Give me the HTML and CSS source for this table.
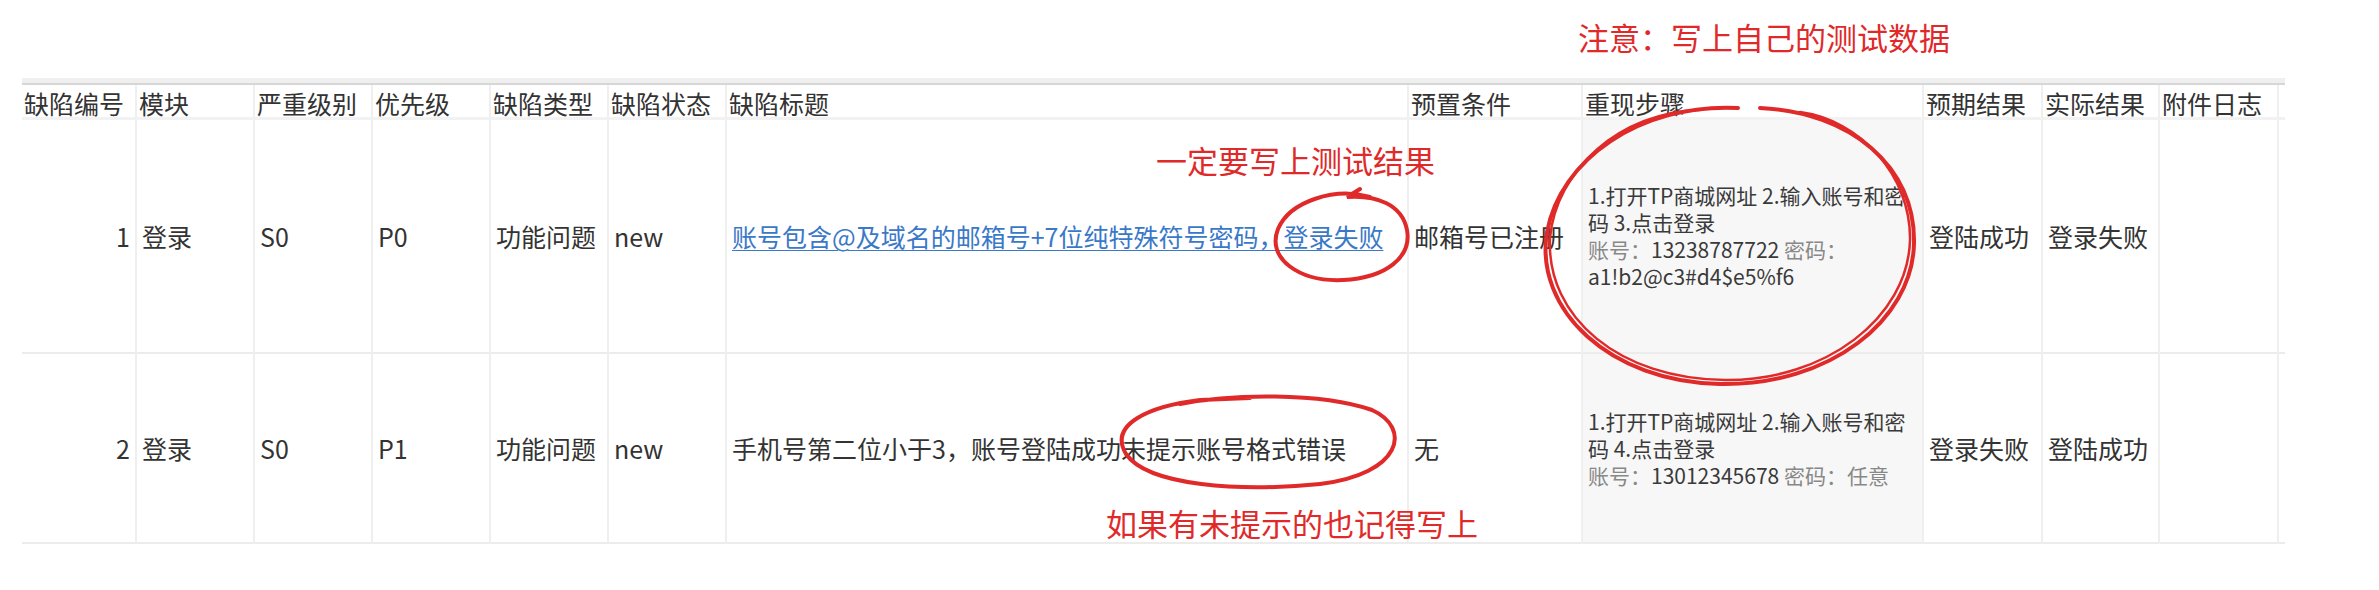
FILE: index.html
```html
<!DOCTYPE html>
<html lang="zh-CN">
<head>
    <meta charset="UTF-8">
    <meta name="viewport" content="width=device-width, initial-scale=1.0">
    <title>缺陷报告</title>
    <link rel="stylesheet" href="styles.css">
</head>
<body>
    <div class="page">
        <p class="note">注意：写上自己的测试数据</p>
        <div class="sheet">
            <div class="strip"></div>
            <div class="grid">
                <!-- header -->
                <div class="cell head">缺陷编号</div>
                <div class="cell head">模块</div>
                <div class="cell head">严重级别</div>
                <div class="cell head">优先级</div>
                <div class="cell head">缺陷类型</div>
                <div class="cell head">缺陷状态</div>
                <div class="cell head">缺陷标题</div>
                <div class="cell head">预置条件</div>
                <div class="cell head">重现步骤</div>
                <div class="cell head">预期结果</div>
                <div class="cell head">实际结果</div>
                <div class="cell head">附件日志</div>
                <div class="cell head edge"></div>

                <!-- row 1 -->
                <div class="cell num">1</div>
                <div class="cell">登录</div>
                <div class="cell">S0</div>
                <div class="cell">P0</div>
                <div class="cell">功能问题</div>
                <div class="cell">new</div>
                <div class="cell"><a class="link" href="#">账号包含@及域名的邮箱号+7位纯特殊符号密码，登录失败</a></div>
                <div class="cell">邮箱号已注册</div>
                <div class="cell steps">
                    <div>1.打开TP商城网址 2.输入账号和密</div>
                    <div>码 3.点击登录</div>
                    <div><span class="muted">账号：</span>13238787722 <span class="muted">密码：</span></div>
                    <div>a1!b2@c3#d4$e5%f6</div>
                </div>
                <div class="cell">登陆成功</div>
                <div class="cell">登录失败</div>
                <div class="cell"></div>
                <div class="cell edge"></div>

                <!-- row 2 -->
                <div class="cell num">2</div>
                <div class="cell">登录</div>
                <div class="cell">S0</div>
                <div class="cell">P1</div>
                <div class="cell">功能问题</div>
                <div class="cell">new</div>
                <div class="cell">手机号第二位小于3，账号登陆成功未提示账号格式错误</div>
                <div class="cell">无</div>
                <div class="cell steps">
                    <div>1.打开TP商城网址 2.输入账号和密</div>
                    <div>码 4.点击登录</div>
                    <div><span class="muted">账号：</span>13012345678 <span class="muted">密码：任意</span></div>
                </div>
                <div class="cell">登录失败</div>
                <div class="cell">登陆成功</div>
                <div class="cell"></div>
                <div class="cell edge"></div>
            </div>
        </div>
    </div>

    <!-- hand-drawn annotations on top of the sheet -->
    <p class="tip tip-result">一定要写上测试结果</p>
    <p class="tip tip-missing">如果有未提示的也记得写上</p>
    <svg class="marks" width="2379" height="590" viewBox="0 0 2379 590">
        <g fill="none" stroke="#e02a2a" stroke-linecap="round">
            <path stroke-width="4" d="M1370,197 C1335,187 1290,201 1278,229 C1266,259 1300,282 1343,280 C1386,278 1412,257 1407,230 C1402,204 1376,195 1347,197 L1360,189"/>
            <path stroke-width="4" d="M1738,108 C1640,103 1560,160 1547,232 C1534,310 1610,382 1720,384 C1830,386 1912,320 1914,244 C1916,166 1850,112 1760,108"/>
            <path stroke-width="2.5" d="M1700,110 C1620,112 1556,170 1550,238 C1546,318 1620,379 1725,380 C1825,381 1908,318 1910,240 C1911,175 1860,120 1800,112"/>
            <path stroke-width="4" d="M1180,404 C1230,394 1320,392 1372,410 C1412,428 1402,474 1320,484 C1240,492 1148,486 1126,454 C1108,424 1150,406 1200,400 L1250,398"/>
        </g>
    </svg>
</body>
</html>
```

FILE: styles.css
```css
/* Global */
body {
    font-family: "Noto Sans CJK SC", "Noto Sans", sans-serif;
    margin: 0;
    padding: 0;
    background-color: #fff;
    color: #333;
    position: relative;
    width: 2379px;
    height: 590px;
    overflow: hidden;
}

.page {
    padding-top: 23px;
}

/* Red notes */
.note {
    margin: 0 0 0 1578px;
    height: 55px;
    font-size: 31px;
    line-height: 28px;
    color: #e02a2a;
}

.tip {
    position: absolute;
    margin: 0;
    font-size: 31px;
    line-height: 36px;
    color: #e02a2a;
    white-space: nowrap;
}

.tip-result {
    left: 1156px;
    top: 142px;
}

.tip-missing {
    left: 1106px;
    top: 505px;
}

.marks {
    position: absolute;
    left: 0;
    top: 0;
    pointer-events: none;
}

/* Sheet */
.sheet {
    margin-left: 22px;
    width: 2263px;
}

.strip {
    height: 5px;
    background-color: #efefef;
    border-bottom: 2px solid #d6d6d6;
}

.grid {
    display: grid;
    grid-template-columns: 115px 118px 118px 118px 118px 118px 682px 174px 341px 119px 117px 119px 6px;
    grid-template-rows: 35px 234px 190px;
}

.cell {
    display: flex;
    flex-direction: column;
    justify-content: center;
    padding: 0 0 0 5px;
    font-size: 25px;
    line-height: 30px;
    white-space: nowrap;
    border-right: 2px solid #efefef;
    border-bottom: 2px solid #ececec;
    overflow: visible;
}

.head {
    padding: 3px 0 0 2px;
    border-bottom: 3px solid #f2f2f2;
}

.num {
    align-items: flex-end;
    padding: 0 5px 0 0;
}

.edge {
    border-right: none;
    padding: 0;
}

.link {
    color: #3a78c8;
    text-decoration: underline;
    text-decoration-thickness: 1px;
    text-underline-offset: 3px;
}

/* Steps column */
.steps {
    background-color: #f7f7f7;
    font-size: 21px;
    line-height: 27px;
    color: #3a3a3a;
}

.muted {
    color: #888;
}
```
